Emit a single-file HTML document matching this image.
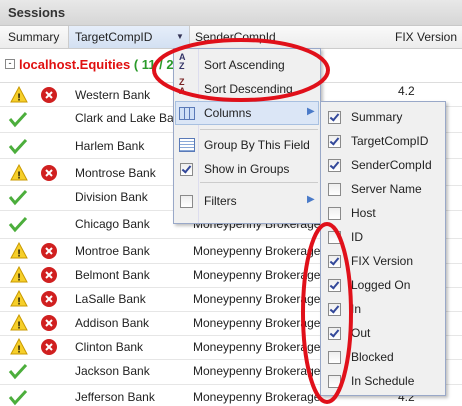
<!DOCTYPE html><html><head><style>
body{margin:0;width:462px;height:404px;overflow:hidden;background:#fff;font-family:"Liberation Sans",sans-serif;font-size:12px;color:#222;position:relative}
.a{position:absolute}
.hdr{left:0;top:0;width:462px;height:25px;background:linear-gradient(#e8e8e8,#d6d6d6);border-bottom:1px solid #c8c8c8;font-weight:bold;font-size:13px;color:#333;line-height:25px;text-indent:8px}
.ch{top:26px;height:22px;line-height:22px;background:linear-gradient(#fafafa,#ececec);border-bottom:1px solid #ccc;width:462px;left:0}
.txt{position:absolute;white-space:nowrap}
.menu{background:#f0f0f0;border:1px solid #99a8c8;box-shadow:2px 2px 3px rgba(0,0,0,.25)}
.cb{position:absolute;width:11px;height:11px;border:1px solid #8a8a8a;background:linear-gradient(#eee,#fff)}
.ck::after{content:"";position:absolute;left:3px;top:0px;width:3px;height:7px;border:solid #33489a;border-width:0 2px 2px 0;transform:rotate(40deg)}
</style></head><body>
<div class="a hdr">Sessions</div>
<div class="a ch">
<span class="txt" style="left:8px">Summary</span>
<div class="a" style="left:68px;top:0;width:120px;height:22px;background:linear-gradient(#e6eefa,#d3e0f2);border-left:1px solid #ccc;border-right:1px solid #ccc"></div>
<span class="txt" style="left:75px">TargetCompID</span>
<span class="txt" style="left:176px;font-size:8px;color:#335">▼</span>
<span class="txt" style="left:195px">SenderCompId</span>
<span class="txt" style="left:395px">FIX Version</span>
</div>
<div class="a" style="left:0;top:49px;width:462px;height:33px;border-bottom:1px solid #ddd"></div>
<div class="a" style="left:5px;top:59px;width:8px;height:8px;border:1px solid #888;font-size:9px;line-height:7px;text-align:center">-</div>
<div class="a" style="left:19px;top:57px;font-weight:bold;font-size:13px;color:#e01010;white-space:nowrap">localhost.Equities <span style="color:#2a9a2a">( 11 / 20</span></div>

<div class="a" style="left:0;top:0">
<svg class="a" style="left:10px;top:86px" width="18" height="18"><polygon points="9,1 17,16 1,16" fill="#f6cf2a" stroke="#c99a00"/><text x="9" y="14.5" font-size="10" font-weight="bold" text-anchor="middle" font-family="Liberation Sans">!</text></svg>
<svg class="a" style="left:40px;top:86px" width="18" height="18"><circle cx="9" cy="9" r="8" fill="#d02020"/><path d="M6 6L12 12M12 6L6 12" stroke="#fff" stroke-width="2"/></svg>
<span class="txt" style="left:75px;top:88px">Western Bank</span><span class="txt" style="left:398px;top:84px">4.2</span>
<svg class="a" style="left:8px;top:110px" width="20" height="18"><path d="M2 9L7 15L18 3" fill="none" stroke="#4cae3c" stroke-width="3"/></svg>
<span class="txt" style="left:75px;top:111px">Clark and Lake Bank</span>
<svg class="a" style="left:8px;top:137px" width="20" height="18"><path d="M2 9L7 15L18 3" fill="none" stroke="#4cae3c" stroke-width="3"/></svg>
<span class="txt" style="left:75px;top:139px">Harlem Bank</span>
<svg class="a" style="left:10px;top:164px" width="18" height="18"><polygon points="9,1 17,16 1,16" fill="#f6cf2a" stroke="#c99a00"/><text x="9" y="14.5" font-size="10" font-weight="bold" text-anchor="middle" font-family="Liberation Sans">!</text></svg>
<svg class="a" style="left:40px;top:164px" width="18" height="18"><circle cx="9" cy="9" r="8" fill="#d02020"/><path d="M6 6L12 12M12 6L6 12" stroke="#fff" stroke-width="2"/></svg>
<span class="txt" style="left:75px;top:166px">Montrose Bank</span>
<svg class="a" style="left:8px;top:188px" width="20" height="18"><path d="M2 9L7 15L18 3" fill="none" stroke="#4cae3c" stroke-width="3"/></svg>
<span class="txt" style="left:75px;top:190px">Division Bank</span>
<svg class="a" style="left:8px;top:215px" width="20" height="18"><path d="M2 9L7 15L18 3" fill="none" stroke="#4cae3c" stroke-width="3"/></svg>
<span class="txt" style="left:75px;top:217px">Chicago Bank</span><span class="txt" style="left:193px;top:217px">Moneypenny Brokerage</span>
</div>
<div class="a" style="left:0;top:0">
<div class="a" style="left:0;top:106px;width:462px;border-top:1px solid #e6e6e6"></div>
<div class="a" style="left:0;top:132px;width:462px;border-top:1px solid #e6e6e6"></div>
<div class="a" style="left:0;top:158px;width:462px;border-top:1px solid #e6e6e6"></div>
<div class="a" style="left:0;top:185px;width:462px;border-top:1px solid #e6e6e6"></div>
<div class="a" style="left:0;top:210px;width:462px;border-top:1px solid #e6e6e6"></div>
<div class="a" style="left:0;top:238px;width:462px;border-top:1px solid #e6e6e6"></div>
<div class="a" style="left:0;top:263px;width:462px;border-top:1px solid #e6e6e6"></div>
<div class="a" style="left:0;top:287px;width:462px;border-top:1px solid #e6e6e6"></div>
<div class="a" style="left:0;top:311px;width:462px;border-top:1px solid #e6e6e6"></div>
<div class="a" style="left:0;top:335px;width:462px;border-top:1px solid #e6e6e6"></div>
<div class="a" style="left:0;top:359px;width:462px;border-top:1px solid #e6e6e6"></div>
<div class="a" style="left:0;top:384px;width:462px;border-top:1px solid #e6e6e6"></div>
</div>
<div class="a" style="left:0;top:0">
<svg class="a" style="left:10px;top:242px" width="18" height="18"><polygon points="9,1 17,16 1,16" fill="#f6cf2a" stroke="#c99a00"/><text x="9" y="14.5" font-size="10" font-weight="bold" text-anchor="middle" font-family="Liberation Sans">!</text></svg>
<svg class="a" style="left:40px;top:242px" width="18" height="18"><circle cx="9" cy="9" r="8" fill="#d02020"/><path d="M6 6L12 12M12 6L6 12" stroke="#fff" stroke-width="2"/></svg>
<span class="txt" style="left:75px;top:244px">Montroe Bank</span><span class="txt" style="left:193px;top:244px">Moneypenny Brokerage</span>
<svg class="a" style="left:10px;top:266px" width="18" height="18"><polygon points="9,1 17,16 1,16" fill="#f6cf2a" stroke="#c99a00"/><text x="9" y="14.5" font-size="10" font-weight="bold" text-anchor="middle" font-family="Liberation Sans">!</text></svg>
<svg class="a" style="left:40px;top:266px" width="18" height="18"><circle cx="9" cy="9" r="8" fill="#d02020"/><path d="M6 6L12 12M12 6L6 12" stroke="#fff" stroke-width="2"/></svg>
<span class="txt" style="left:75px;top:268px">Belmont Bank</span><span class="txt" style="left:193px;top:268px">Moneypenny Brokerage</span>
<svg class="a" style="left:10px;top:290px" width="18" height="18"><polygon points="9,1 17,16 1,16" fill="#f6cf2a" stroke="#c99a00"/><text x="9" y="14.5" font-size="10" font-weight="bold" text-anchor="middle" font-family="Liberation Sans">!</text></svg>
<svg class="a" style="left:40px;top:290px" width="18" height="18"><circle cx="9" cy="9" r="8" fill="#d02020"/><path d="M6 6L12 12M12 6L6 12" stroke="#fff" stroke-width="2"/></svg>
<span class="txt" style="left:75px;top:292px">LaSalle Bank</span><span class="txt" style="left:193px;top:292px">Moneypenny Brokerage</span>
<svg class="a" style="left:10px;top:314px" width="18" height="18"><polygon points="9,1 17,16 1,16" fill="#f6cf2a" stroke="#c99a00"/><text x="9" y="14.5" font-size="10" font-weight="bold" text-anchor="middle" font-family="Liberation Sans">!</text></svg>
<svg class="a" style="left:40px;top:314px" width="18" height="18"><circle cx="9" cy="9" r="8" fill="#d02020"/><path d="M6 6L12 12M12 6L6 12" stroke="#fff" stroke-width="2"/></svg>
<span class="txt" style="left:75px;top:316px">Addison Bank</span><span class="txt" style="left:193px;top:316px">Moneypenny Brokerage</span>
<svg class="a" style="left:10px;top:338px" width="18" height="18"><polygon points="9,1 17,16 1,16" fill="#f6cf2a" stroke="#c99a00"/><text x="9" y="14.5" font-size="10" font-weight="bold" text-anchor="middle" font-family="Liberation Sans">!</text></svg>
<svg class="a" style="left:40px;top:338px" width="18" height="18"><circle cx="9" cy="9" r="8" fill="#d02020"/><path d="M6 6L12 12M12 6L6 12" stroke="#fff" stroke-width="2"/></svg>
<span class="txt" style="left:75px;top:340px">Clinton Bank</span><span class="txt" style="left:193px;top:340px">Moneypenny Brokerage</span>
<svg class="a" style="left:8px;top:362px" width="20" height="18"><path d="M2 9L7 15L18 3" fill="none" stroke="#4cae3c" stroke-width="3"/></svg>
<span class="txt" style="left:75px;top:364px">Jackson Bank</span><span class="txt" style="left:193px;top:364px">Moneypenny Brokerage</span>
<svg class="a" style="left:8px;top:388px" width="20" height="18"><path d="M2 9L7 15L18 3" fill="none" stroke="#4cae3c" stroke-width="3"/></svg>
<span class="txt" style="left:75px;top:390px">Jefferson Bank</span><span class="txt" style="left:193px;top:390px">Moneypenny Brokerage</span><span class="txt" style="left:398px;top:390px">4.2</span>
</div>

<div class="a menu" style="left:173px;top:48px;width:146px;height:174px">
<div class="a" style="left:24px;top:0;width:1px;height:174px;background:#dde"></div>
<div class="a" style="left:1px;top:52px;width:144px;height:24px;background:#dbe6f6;border:1px solid #a8c0e0;box-sizing:border-box"></div>
<span class="txt" style="left:5px;top:4px;font-size:9px;font-weight:bold;color:#336;line-height:9px">A<br>Z</span>
<span class="txt" style="left:30px;top:9px">Sort Ascending</span>
<span class="txt" style="left:5px;top:29px;font-size:9px;font-weight:bold;color:#722;line-height:9px">Z<br>A</span>
<span class="txt" style="left:30px;top:33px">Sort Descending</span>
<div class="a" style="left:5px;top:58px;width:14px;height:11px;border:1px solid #5a7ab8;background:repeating-linear-gradient(90deg,#cfe0f7 0 4px,#5a7ab8 4px 5px)"></div>
<span class="txt" style="left:30px;top:57px">Columns</span>
<span class="txt" style="left:133px;top:57px;color:#4a7ac8;font-size:10px">▶</span>
<div class="a" style="left:26px;top:80px;width:118px;height:1px;background:#ccc"></div>
<div class="a" style="left:5px;top:89px;width:14px;height:12px;border:1px solid #5a7ab8;background:repeating-linear-gradient(#fff 0 2px,#8aa8d8 2px 3px)"></div>
<span class="txt" style="left:30px;top:89px">Group By This Field</span>
<div class="cb ck" style="left:6px;top:114px"></div>
<span class="txt" style="left:30px;top:113px">Show in Groups</span>
<div class="a" style="left:26px;top:133px;width:118px;height:1px;background:#ccc"></div>
<div class="cb" style="left:6px;top:146px"></div>
<span class="txt" style="left:30px;top:145px">Filters</span>
<span class="txt" style="left:133px;top:145px;color:#4a7ac8;font-size:10px">▶</span>
</div>

<div class="a menu" style="left:320px;top:101px;width:124px;height:293px">
<div class="cb ck" style="left:7px;top:9px"></div><span class="txt" style="left:30px;top:8px">Summary</span>
<div class="cb ck" style="left:7px;top:33px"></div><span class="txt" style="left:30px;top:32px">TargetCompID</span>
<div class="cb ck" style="left:7px;top:57px"></div><span class="txt" style="left:30px;top:56px">SenderCompId</span>
<div class="cb" style="left:7px;top:81px"></div><span class="txt" style="left:30px;top:80px">Server Name</span>
<div class="cb" style="left:7px;top:105px"></div><span class="txt" style="left:30px;top:104px">Host</span>
<div class="cb" style="left:7px;top:129px"></div><span class="txt" style="left:30px;top:128px">ID</span>
<div class="cb ck" style="left:7px;top:153px"></div><span class="txt" style="left:30px;top:152px">FIX Version</span>
<div class="cb ck" style="left:7px;top:177px"></div><span class="txt" style="left:30px;top:176px">Logged On</span>
<div class="cb ck" style="left:7px;top:201px"></div><span class="txt" style="left:30px;top:200px">In</span>
<div class="cb ck" style="left:7px;top:225px"></div><span class="txt" style="left:30px;top:224px">Out</span>
<div class="cb" style="left:7px;top:249px"></div><span class="txt" style="left:30px;top:248px">Blocked</span>
<div class="cb" style="left:7px;top:273px"></div><span class="txt" style="left:30px;top:272px">In Schedule</span>
</div>

<svg class="a" style="left:0;top:0" width="462" height="404">
<ellipse cx="241" cy="70" rx="87" ry="30" fill="none" stroke="#e0101a" stroke-width="4"/>
<ellipse cx="327" cy="313" rx="24" ry="89" fill="none" stroke="#e0101a" stroke-width="4"/>
</svg>
</body></html>
